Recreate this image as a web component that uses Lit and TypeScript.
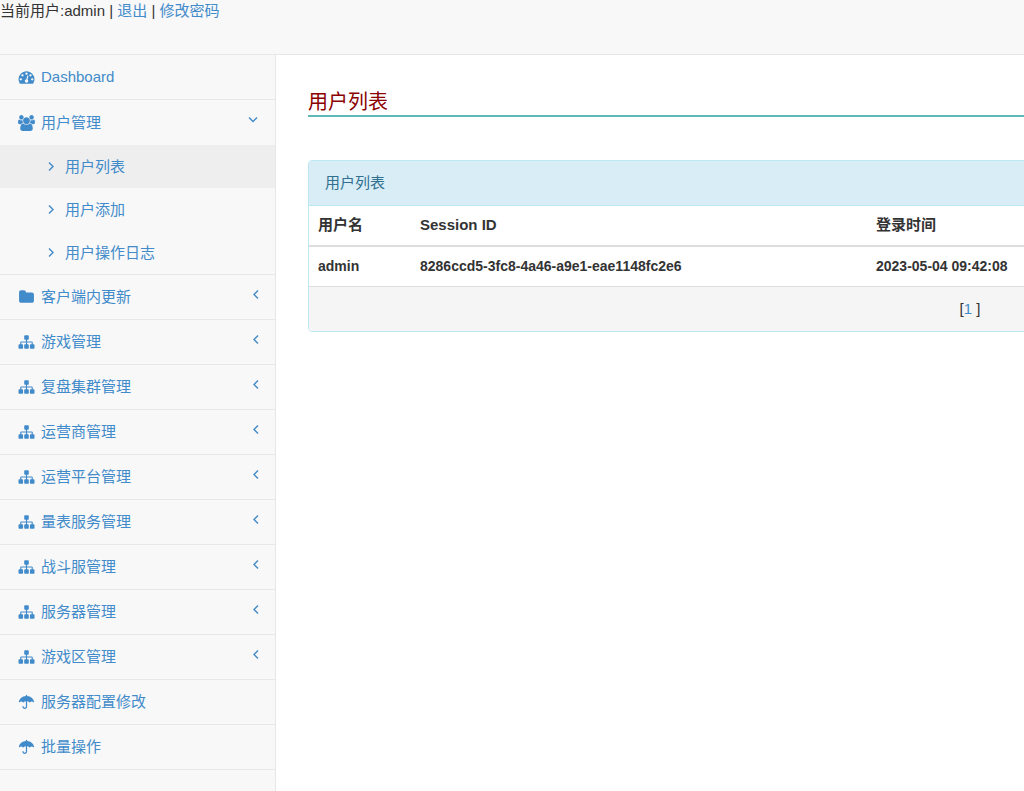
import { LitElement, html, css, svg } from "lit";
import { customElement, state } from "lit/decorators.js";
import { classMap } from "lit/directives/class-map.js";

type IconName = "dashboard" | "users" | "folder" | "sitemap" | "umbrella";

interface MenuItem {
  label: string;
  icon: IconName;
  children?: string[];
  collapsible?: boolean;
}

const ICONS: Record<IconName, { box: string; path: string }> = {
  dashboard: {
    box: "0 0 1792 1792",
    path: "M384 1152q0-53-37.5-90.5t-90.5-37.5-90.5 37.5-37.5 90.5 37.5 90.5 90.5 37.5 90.5-37.5 37.5-90.5zm192-448q0-53-37.5-90.5t-90.5-37.5-90.5 37.5-37.5 90.5 37.5 90.5 90.5 37.5 90.5-37.5 37.5-90.5zm428 481l101-382q6-26-7.5-48.5t-38.5-29.5-48 6.5-30 39.5l-101 382q-60 5-107 43.5t-63 98.5q-20 77 20 146t117 89 146-20 89-117q16-60-6-117t-72-91zm660-33q0-53-37.5-90.5t-90.5-37.5-90.5 37.5-37.5 90.5 37.5 90.5 90.5 37.5 90.5-37.5 37.5-90.5zm-640-640q0-53-37.5-90.5t-90.5-37.5-90.5 37.5-37.5 90.5 37.5 90.5 90.5 37.5 90.5-37.5 37.5-90.5zm448 192q0-53-37.5-90.5t-90.5-37.5-90.5 37.5-37.5 90.5 37.5 90.5 90.5 37.5 90.5-37.5 37.5-90.5zm320 448q0 261-141 483-19 29-54 29h-1402q-35 0-54-29-141-221-141-483 0-182 71-348t191-286 286-191 348-71 348 71 286 191 191 286 71 348z",
  },
  users: {
    box: "0 0 1920 1792",
    path: "M593 896q-162 5-265 128h-134q-82 0-138-40.5t-56-118.5q0-353 124-353 6 0 43.5 21t97.5 42.5 119 21.5q67 0 133-23-5 37-5 66 0 139 81 256zm1071 637q0 120-73 189.5t-194 69.5h-874q-121 0-194-69.5t-73-189.5q0-53 3.5-103.5t14-109 26.5-108.5 43-97.5 62-81 85.5-53.5 111.5-20q10 0 43 21.5t73 48 107 48 135 21.5 135-21.5 107-48 73-48 43-21.5q61 0 111.5 20t85.5 53.5 62 81 43 97.5 26.5 108.5 14 109 3.5 103.5zm-1024-1277q0 106-75 181t-181 75-181-75-75-181 75-181 181-75 181 75 75 181zm704 384q0 159-112.5 271.5t-271.5 112.5-271.5-112.5-112.5-271.5 112.5-271.5 271.5-112.5 271.5 112.5 112.5 271.5zm576 225q0 78-56 118.5t-138 40.5h-134q-103-123-265-128 81-117 81-256 0-29-5-66 66 23 133 23 59 0 119-21.5t97.5-42.5 43.5-21q124 0 124 353zm-128-609q0 106-75 181t-181 75-181-75-75-181 75-181 181-75 181 75 75 181z",
  },
  folder: {
    box: "0 0 1792 1792",
    path: "M1728 608v704q0 92-66 158t-158 66h-1216q-92 0-158-66t-66-158v-960q0-92 66-158t158-66h320q92 0 158 66t66 158v32h672q92 0 158 66t66 158z",
  },
  sitemap: {
    box: "0 0 1792 1792",
    path: "M1792 1248v320q0 40-28 68t-68 28h-320q-40 0-68-28t-28-68v-320q0-40 28-68t68-28h96v-192h-512v192h96q40 0 68 28t28 68v320q0 40-28 68t-68 28h-320q-40 0-68-28t-28-68v-320q0-40 28-68t68-28h96v-192h-512v192h96q40 0 68 28t28 68v320q0 40-28 68t-68 28h-320q-40 0-68-28t-28-68v-320q0-40 28-68t68-28h96v-192q0-52 38-90t90-38h512v-192h-96q-40 0-68-28t-28-68v-320q0-40 28-68t68-28h320q40 0 68 28t28 68v320q0 40-28 68t-68 28h-96v192h512q52 0 90 38t38 90v192h96q40 0 68 28t28 68z",
  },
  umbrella: {
    box: "0 0 1792 1792",
    path: "M826 210V150Q826 80 896 80T966 150V210C1350 235 1670 490 1760 880Q1764 930 1720 930Q1700 930 1680 910C1570 800 1410 790 1290 930Q1250 970 1210 930C1150 850 1060 806 966 802V1408C966 1570 850 1680 700 1680S434 1570 434 1408Q434 1338 504 1338T574 1408C574 1490 630 1540 700 1540S826 1490 826 1408V802C732 806 642 850 582 930Q542 970 502 930C382 790 222 800 112 910Q92 930 72 930Q28 930 32 880C122 490 442 235 826 210Z",
  },
};

const MENU: MenuItem[] = [
  { label: "Dashboard", icon: "dashboard" },
  { label: "用户管理", icon: "users", collapsible: true, children: ["用户列表", "用户添加", "用户操作日志"] },
  { label: "客户端内更新", icon: "folder", collapsible: true },
  { label: "游戏管理", icon: "sitemap", collapsible: true },
  { label: "复盘集群管理", icon: "sitemap", collapsible: true },
  { label: "运营商管理", icon: "sitemap", collapsible: true },
  { label: "运营平台管理", icon: "sitemap", collapsible: true },
  { label: "量表服务管理", icon: "sitemap", collapsible: true },
  { label: "战斗服管理", icon: "sitemap", collapsible: true },
  { label: "服务器管理", icon: "sitemap", collapsible: true },
  { label: "游戏区管理", icon: "sitemap", collapsible: true },
  { label: "服务器配置修改", icon: "umbrella" },
  { label: "批量操作", icon: "umbrella" },
];

const SESSIONS = [
  { user: "admin", id: "8286ccd5-3fc8-4a46-a9e1-eae1148fc2e6", time: "2023-05-04 09:42:08" },
];

const ANGLES = {
  left: svg`<path d="M7 1.5 3 5.5l4 4" />`,
  right: svg`<path d="M3 1.5l4 4-4 4" />`,
  down: svg`<path d="M1 3.5l4 4 4-4" />`,
};

const angle = (direction: keyof typeof ANGLES) => html`
  <svg class="angle" viewBox="0 0 10 11" aria-hidden="true">${ANGLES[direction]}</svg>
`;

const base = css`
  * {
    box-sizing: border-box;
  }
  a {
    color: #428bca;
    text-decoration: none;
  }
`;

@customElement("side-menu")
class SideMenu extends LitElement {
  static styles = [
    base,
    css`
      :host {
        display: block;
        flex: none;
        width: 276px;
        background: #f8f8f8;
        border-right: 1px solid #e7e7e7;
      }
      .list {
        margin: 0;
        padding: 0;
        list-style: none;
      }
      .item {
        border-bottom: 1px solid #e7e7e7;
      }
      .link {
        display: flex;
        align-items: center;
        height: 44px;
        padding: 0 17px 0 18px;
        gap: 6px;
      }
      .icon {
        width: 17px;
        height: 16px;
        fill: currentColor;
      }
      .text {
        flex: 1;
      }
      .angle {
        width: 10px;
        height: 11px;
        fill: none;
        stroke: currentColor;
        stroke-width: 1.4;
      }
      .link > .angle {
        margin-bottom: 6px;
        margin-right: -3px;
      }
      .link.open > .angle {
        margin-right: 0;
      }
      .link.sub {
        height: 43px;
        padding: 0 17px 0 46px;
        gap: 9px;
      }
      .link.sub > .angle {
        margin: 0;
      }
      .open {
        height: 45px;
      }
      .active {
        background: #eee;
      }
    `,
  ];

  @state() private current = "用户列表";

  private renderSub(label: string) {
    return html`<li>
      <a
        href="#"
        class=${classMap({ link: true, sub: true, active: label === this.current })}
        @click=${() => (this.current = label)}
        >${angle("right")}<span class="text">${label}</span></a
      >
    </li>`;
  }

  private renderItem(item: MenuItem) {
    const icon = ICONS[item.icon];
    return html`<li class="item">
      <a href="#" class=${classMap({ link: true, open: !!item.children })}>
        <svg class="icon" viewBox=${icon.box} aria-hidden="true"><path d=${icon.path}></path></svg>
        <span class="text">${item.label}</span>
        ${item.collapsible ? angle(item.children ? "down" : "left") : ""}
      </a>
      ${item.children ? html`<ul class="list">${item.children.map((c) => this.renderSub(c))}</ul>` : ""}
    </li>`;
  }

  render() {
    return html`<nav><ul class="list">${MENU.map((i) => this.renderItem(i))}</ul></nav>`;
  }
}

@customElement("session-panel")
class SessionPanel extends LitElement {
  static styles = [
    base,
    css`
      :host {
        display: block;
        min-width: 1324px;
        border: 1px solid #bce8f1;
        border-radius: 4px;
        overflow: hidden;
      }
      .head {
        padding: 11px 16px;
        color: #31708f;
        background: #d9edf7;
        border-bottom: 1px solid #bce8f1;
      }
      .table {
        width: 100%;
        table-layout: fixed;
        border-collapse: separate;
        border-spacing: 0;
      }
      .user {
        width: 102px;
      }
      .session {
        width: 456px;
      }
      .table th,
      .table td {
        padding: 8px 9px 9px;
        text-align: left;
        font-weight: bold;
      }
      .table th {
        border-bottom: 2px solid #ddd;
      }
      .table td {
        font-size: 14px;
      }
      .foot {
        padding: 11px 16px;
        text-align: center;
        background: #f5f5f5;
        border-top: 1px solid #ddd;
      }
    `,
  ];

  render() {
    return html`
      <div class="head">用户列表</div>
      <table class="table">
        <thead>
          <tr>
            <th class="user">用户名</th>
            <th class="session">Session ID</th>
            <th>登录时间</th>
          </tr>
        </thead>
        <tbody>
          ${SESSIONS.map((s) => html`<tr><td>${s.user}</td><td>${s.id}</td><td>${s.time}</td></tr>`)}
        </tbody>
      </table>
      <div class="foot">[<a href="#">1</a> ]</div>
    `;
  }
}

@customElement("app-root")
class AppRoot extends LitElement {
  static styles = [
    base,
    css`
      :host {
        display: flex;
        flex-direction: column;
        height: 100vh;
        overflow: hidden;
        font-family: "Liberation Sans", Arial, "Noto Sans CJK SC", sans-serif;
        font-size: 15px;
        line-height: 22px;
        color: #333;
        background: #fff;
      }
      .top {
        flex: none;
        min-height: 55px;
        background: #f8f8f8;
        border-bottom: 1px solid #e7e7e7;
      }
      .body {
        display: flex;
        flex: 1;
        min-height: 0;
      }
      .main {
        flex: 1;
        min-width: 0;
        padding: 34px 0 0 32px;
        overflow: hidden;
      }
      .title {
        margin: 0 0 43px;
        font-size: 20px;
        font-weight: normal;
        line-height: 26px;
        color: #8b0000;
        border-bottom: 2px solid #5fb8b8;
      }
    `,
  ];

  render() {
    return html`
      <header class="top">当前用户:admin | <a href="#">退出</a> | <a href="#">修改密码</a></header>
      <div class="body">
        <side-menu></side-menu>
        <main class="main">
          <h1 class="title">用户列表</h1>
          <session-panel></session-panel>
        </main>
      </div>
    `;
  }
}
